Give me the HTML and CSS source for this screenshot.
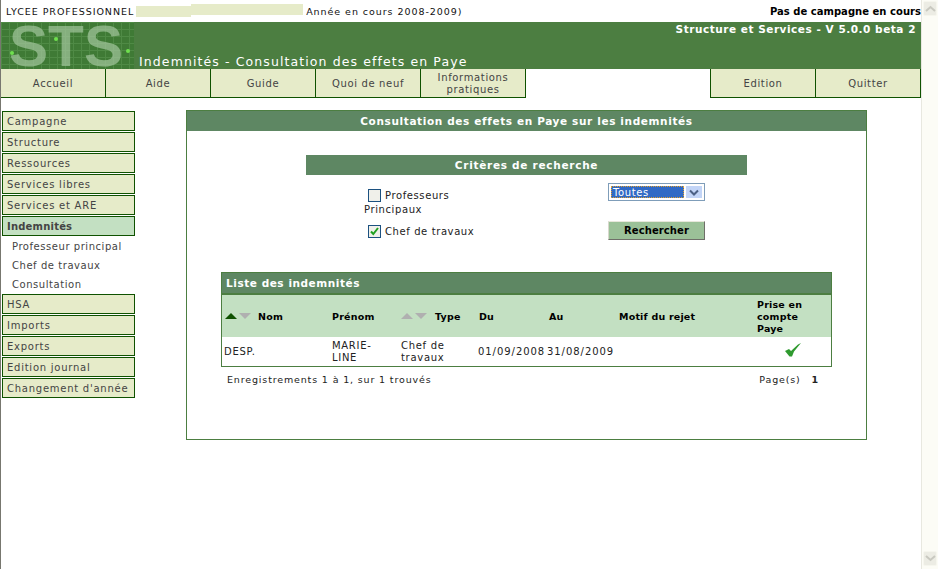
FILE: index.html
```html
<!DOCTYPE html>
<html lang="fr">
<head>
<meta charset="utf-8">
<title>Indemnités - Consultation des effets en Paye</title>
<link rel="stylesheet" href="styles.css">
</head>
<body>
<div class="page">
  <div class="content">
    <div class="topline">
      <div class="school">LYCEE PROFESSIONNEL<span class="mask-a"></span><span class="mask-b"></span>Année en cours 2008-2009)</div>
      <div class="campaign">Pas de campagne en cours</div>
    </div>
    <header class="banner">
      <svg class="logo" width="133" height="47" viewBox="0 0 133 47">
        <defs>
          <pattern id="grid" width="8" height="7" patternUnits="userSpaceOnUse">
            <rect width="8" height="7" fill="#3f7a35"/>
            <path d="M0 .5H8M.5 0V7" stroke="#4f8a45" stroke-width="1" fill="none"/>
          </pattern>
        </defs>
        <rect width="133" height="47" fill="url(#grid)"/>
        <text class="logo-text" x="8" y="44" textLength="114" lengthAdjust="spacingAndGlyphs">STS</text>
        <circle cx="55" cy="17" r="2" fill="#6fe04e"/>
        <circle cx="11" cy="31" r="2" fill="#6fe04e"/>
        <circle cx="127" cy="29" r="2" fill="#6fe04e"/>
      </svg>
      <h1 class="page-title">Indemnités - Consultation des effets en Paye</h1>
      <div class="version">Structure et Services - V 5.0.0 beta 2</div>
    </header>
    <nav class="tabs">
      <div class="tab-group">
        <a class="tab">Accueil</a>
        <a class="tab">Aide</a>
        <a class="tab">Guide</a>
        <a class="tab">Quoi de neuf</a>
        <a class="tab">Informations<br>pratiques</a>
      </div>
      <div class="tab-group tab-group-right">
        <a class="tab">Edition</a>
        <a class="tab">Quitter</a>
      </div>
    </nav>
    <div class="body-row">
      <aside class="sidebar">
        <a class="menu">Campagne</a>
        <a class="menu">Structure</a>
        <a class="menu">Ressources</a>
        <a class="menu">Services libres</a>
        <a class="menu">Services et ARE</a>
        <a class="menu menu-active">Indemnités</a>
        <div class="submenu">
          <a class="subitem">Professeur principal</a>
          <a class="subitem">Chef de travaux</a>
          <a class="subitem">Consultation</a>
        </div>
        <a class="menu">HSA</a>
        <a class="menu">Imports</a>
        <a class="menu">Exports</a>
        <a class="menu">Edition journal</a>
        <a class="menu">Changement d'année</a>
      </aside>
      <main class="panel">
        <h2 class="panel-title">Consultation des effets en Paye sur les indemnités</h2>
        <h3 class="criteria-title">Critères de recherche</h3>
        <form class="criteria">
          <div class="criteria-left">
            <div class="check-line"><span class="check"></span><span>Professeurs</span></div>
            <div class="wrapped">Principaux</div>
            <div class="check-line check-line-second">
              <span class="check">
                <svg width="11" height="11" viewBox="0 0 11 11"><path d="M2 5.5L4.3 8L9 2" fill="none" stroke="#21a121" stroke-width="2"/></svg>
              </span><span>Chef de travaux</span>
            </div>
          </div>
          <div class="criteria-right">
            <div class="select">
              <span class="select-value">Toutes</span>
              <span class="select-arrow">
                <svg width="10" height="7" viewBox="0 0 10 7"><path d="M1 1.5L5 5.5L9 1.5" fill="none" stroke="#4d6185" stroke-width="2"/></svg>
              </span>
            </div>
            <button class="search" type="button">Rechercher</button>
          </div>
        </form>
        <section class="list">
          <div class="list-title">Liste des indemnités</div>
          <table class="grid">
            <colgroup>
              <col class="c-nom"><col class="c-prenom"><col class="c-type"><col class="c-du"><col class="c-au"><col class="c-motif"><col class="c-prise">
            </colgroup>
            <thead>
              <tr>
                <th class="first"><span class="arrow up on"></span><span class="arrow down"></span><span class="sort-label">Nom</span></th>
                <th>Prénom</th>
                <th><span class="arrow up"></span><span class="arrow down"></span><span class="sort-label-type">Type</span></th>
                <th>Du</th>
                <th class="au">Au</th>
                <th>Motif du rejet</th>
                <th>Prise en<br>compte<br>Paye</th>
              </tr>
            </thead>
            <tbody>
              <tr>
                <td class="first">DESP.</td>
                <td>MARIE-<br>LINE</td>
                <td>Chef de<br>travaux</td>
                <td class="date">01/09/2008</td>
                <td class="date">31/08/2009</td>
                <td></td>
                <td class="ok"><svg width="16" height="14" viewBox="0 0 16 14"><path d="M0 8L4 6L6 8L13 1.5L16 0L9 8.5L7 13.5H4.5Z" fill="#2f9a2f"/></svg></td>
              </tr>
            </tbody>
          </table>
        </section>
        <div class="pager">
          <span>Enregistrements 1 à 1, sur 1 trouvés</span>
          <span class="pages">Page(s) <b>1</b></span>
        </div>
      </main>
    </div>
  </div>
  <div class="scrollbar">
    <span class="sb-btn"><svg width="11" height="7" viewBox="0 0 11 7"><path d="M1 6L5.5 2L10 6" fill="none" stroke="#c9c9c0" stroke-width="2"/></svg></span>
    <span class="sb-btn"><svg width="11" height="7" viewBox="0 0 11 7"><path d="M1 1L5.5 5L10 1" fill="none" stroke="#c9c9c0" stroke-width="2"/></svg></span>
  </div>
</div>
</body>
</html>
```
FILE: styles.css
```css
* { box-sizing: border-box; }
html, body { margin: 0; height: 569px; overflow: hidden; background: #fff; }
body { font: 10px/13px "DejaVu Sans", Verdana, sans-serif; letter-spacing: .75px; color: #000; }
.page { display: flex; height: 569px; }
.content { width: 921px; border-left: 1px solid #77776f; height: 569px; }
.topline { display: flex; justify-content: space-between; height: 22px; padding: 5px 0 0 5px; }
.school { display: flex; font-size: 9.5px; letter-spacing: .95px; color: #111; }
.mask-a { width: 55px; height: 11px; background: #e6ebc9; margin: 1px 0 0 2px; }
.mask-b { width: 112px; height: 11px; background: #e6ebc9; margin: -1px 3px 0 0; }
.campaign { font-weight: bold; letter-spacing: .03px; }
.banner { position: relative; display: flex; height: 47px; background: #4c7e41; color: #fff; }
.logo { flex: none; }
.logo-text { font: bold 58px "Liberation Sans", sans-serif; fill: #a6c9a0; fill-opacity: .68; letter-spacing: 0; }
.page-title { align-self: flex-end; margin: 0 0 0 5px; font-size: 12.5px; line-height: 15px; font-weight: normal; letter-spacing: 1.1px; }
.version { position: absolute; right: 5px; top: 1px; font-weight: bold; letter-spacing: .53px; font-size: 10.5px; }
.tabs { display: flex; justify-content: space-between; height: 29px; }
.tab-group { display: flex; }
.tab-group-right .tab:first-child { border-left: 1px solid #0f5200; }
.tab {
  display: flex; align-items: center; justify-content: center; text-align: center;
  width: 105px; background: #e6ebc9; color: #444; letter-spacing: .65px;
  border-right: 1px solid #0f5200; border-bottom: 1px solid #0f5200;
  line-height: 12px; padding-top: 1px;
}
.tab-group-right .tab:first-child { width: 106px; }
.tab-group-right .tab:last-child { width: 105px; }
.body-row { display: flex; align-items: flex-start; padding-top: 12px; }
.sidebar { width: 133px; margin: 1px 0 0 1px; display: flex; flex-direction: column; gap: 1px; flex: none; }
.menu {
  display: block; height: 20px; line-height: 20px; padding-left: 4px;
  background: #e6ebc9; color: #444; border: 1px solid #0f5200; white-space: nowrap;
}
.menu-active { background: #c3e0c2; font-weight: bold; letter-spacing: .2px; }
.submenu { display: flex; flex-direction: column; margin-top: -1px; }
.subitem { height: 19px; line-height: 21px; padding-left: 10px; color: #444; letter-spacing: .55px; }
.panel { width: 681px; height: 330px; margin-left: 51px; border: 1px solid #4c7e41; display: flex; flex-direction: column; }
.panel-title {
  margin: 0; height: 20px; background: #5e8763; color: #fff; text-align: center;
  font-size: 10.5px; line-height: 20px; font-weight: bold; letter-spacing: .63px;
}
.criteria-title {
  margin: 24px 0 0 119px; width: 441px; height: 20px; background: #5e8763; color: #fff; text-align: center;
  font-size: 10.5px; line-height: 20px; font-weight: bold; letter-spacing: .72px;
}
.criteria { display: flex; height: 97px; padding: 8px 0 0 177px; color: #222; letter-spacing: .6px; }
.criteria-left { width: 244px; padding-top: 5px; }
.check-line { display: flex; align-items: center; gap: 4px; padding-left: 4px; height: 14px; }
.check-line-second { margin-top: 8px; }
.wrapped { margin-top: 1px; }
.check { display: flex; align-items: center; justify-content: center; width: 13px; height: 13px; border: 1px solid #1c5180; background: #f0f0ea; }
.criteria-right { display: flex; flex-direction: column; gap: 20px; width: 97px; }
.select { display: flex; height: 18px; padding: 2px; border: 1px solid #7f9db9; background: #fff; }
.select-value { flex: 1; background: #316ac5; color: #fff; outline: 1px dotted #e0a030; outline-offset: -1px; line-height: 14px; padding-left: 2px; }
.select-arrow { display: flex; width: 16px; margin-left: 2px; align-items: center; justify-content: center; background: #c3d5f7; }
.search {
  height: 19px; padding: 0; margin: 0; background: #9bc198; color: #000;
  font: bold 10px/13px "DejaVu Sans", sans-serif; letter-spacing: .1px;
  border: 1px solid; border-color: #e8e8dc #6f6f69 #6f6f69 #d8d8cc;
}
.list { margin: 0 0 0 34px; width: 611px; border: 1px solid #4c7e41; }
.list-title { height: 22px; background: #5e8763; color: #fff; font-weight: bold; line-height: 20px; padding-left: 4px; font-size: 10.5px; letter-spacing: .55px; border-bottom: 2px solid #4c7e41; }
.grid { width: 609px; border-collapse: collapse; table-layout: fixed; }
.c-nom { width: 109px; } .c-prenom { width: 69px; } .c-type { width: 78px; } .c-du { width: 69px; }
.c-au { width: 71px; } .c-motif { width: 138px; } .c-prise { width: 75px; }
.grid th { height: 42px; padding: 2px 0 0 1px; background: #c3e0c2; text-align: left; font-size: 9.5px; letter-spacing: .2px; line-height: 12px; }
.grid th.first { padding-left: 3px; }
.grid th.au { padding-left: 2px; }
.grid td { height: 29px; padding: 0 0 0 1px; font-size: 10px; line-height: 12px; letter-spacing: .7px; color: #222; white-space: nowrap; }
.grid td.first { padding-left: 2px; }
.grid td.date { padding-left: 0; letter-spacing: .95px; }
.grid td.ok { padding-left: 29px; vertical-align: top; padding-top: 6px; }
.arrow { display: inline-block; width: 0; height: 0; border-left: 6.5px solid transparent; border-right: 6.5px solid transparent; margin-right: 2px; vertical-align: 1px; }
.arrow.up { border-bottom: 6px solid #b0b0b0; }
.arrow.up.on { border-bottom-color: #0f5200; }
.arrow.down { border-top: 6px solid #b0b0b0; }
.sort-label { margin-left: 5px; }
.sort-label-type { margin-left: 6px; }
.pager { display: flex; justify-content: space-between; margin: 6px 47px 0 40px; font-size: 9.5px; letter-spacing: .85px; color: #222; }
.pages b { margin-left: 7px; }
.scrollbar { flex: none; width: 17px; height: 569px; background: #fcfcf6; border-left: 1px solid #e8e8e0; display: flex; flex-direction: column; justify-content: space-between; padding: 1px 1px 3px 1px; }
.sb-btn { display: flex; align-items: center; justify-content: center; height: 15px; background: #ecece4; border: 1px solid #f6f6ee; border-radius: 2px; }
```
